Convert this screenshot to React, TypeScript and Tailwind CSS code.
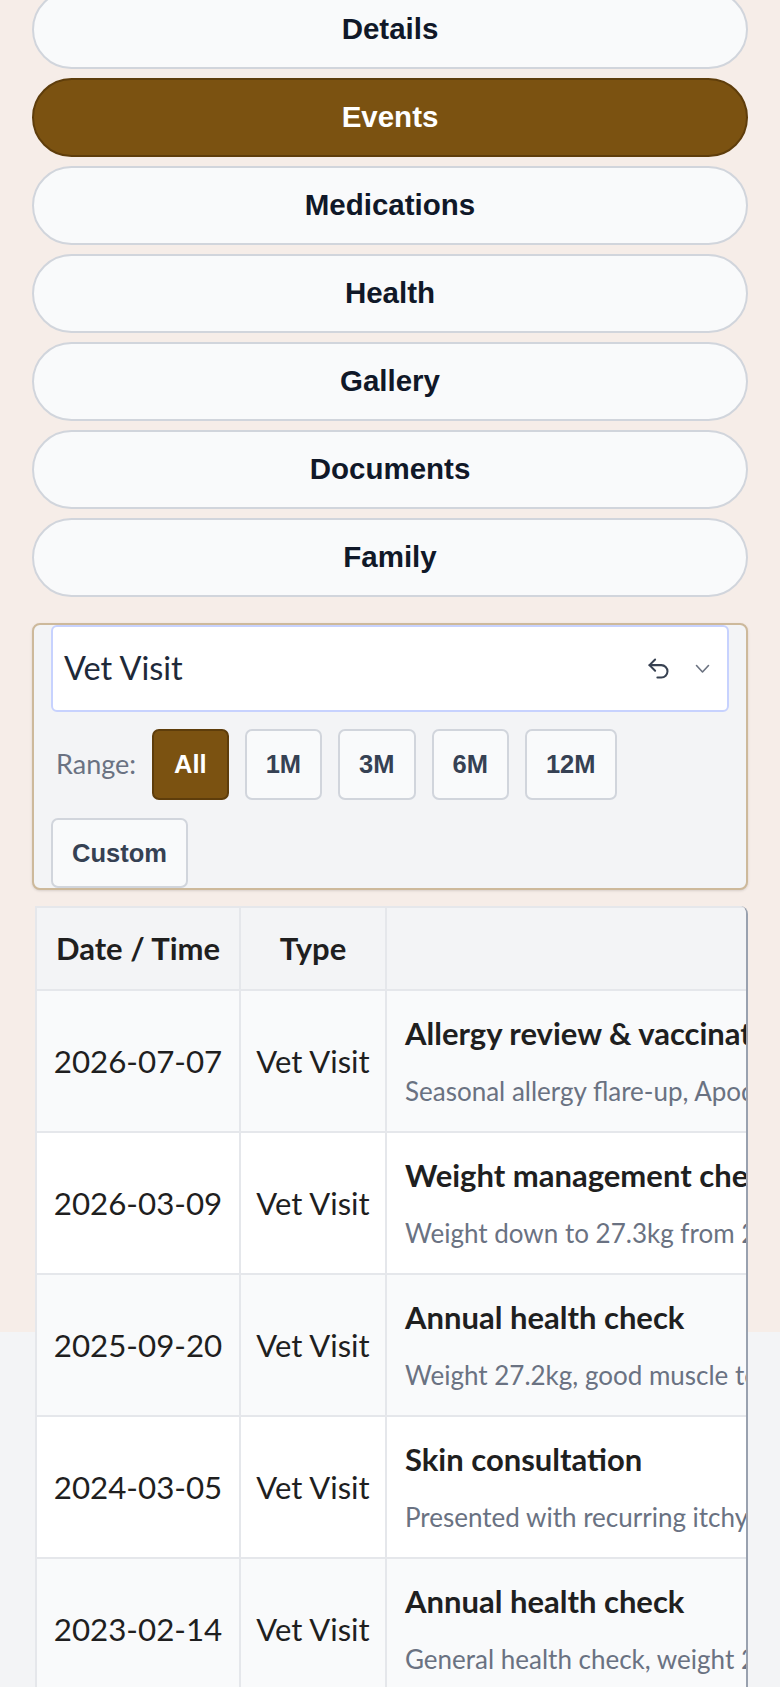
import React from 'react';

const tabs = ['Details', 'Events', 'Medications', 'Health', 'Gallery', 'Documents', 'Family'];
const ranges = ['All', '1M', '3M', '6M', '12M'];

const events = [
  {
    date: '2026-07-07',
    title: 'Allergy review & vaccination',
    note: 'Seasonal allergy flare-up, Apoquel dose adjusted, booster given',
  },
  {
    date: '2026-03-09',
    title: 'Weight management check',
    note: 'Weight down to 27.3kg from 28.1kg, diet plan continued',
  },
  {
    date: '2025-09-20',
    title: 'Annual health check',
    note: 'Weight 27.2kg, good muscle tone, teeth cleaned',
  },
  {
    date: '2024-03-05',
    title: 'Skin consultation',
    note: 'Presented with recurring itchy skin on paws and belly',
  },
  {
    date: '2023-02-14',
    title: 'Annual health check',
    note: 'General health check, weight 26.8kg, all vaccinations up to date',
  },
];

const UndoIcon = () => (
  <svg width="27" height="27" viewBox="0 0 24 24" fill="none" stroke="#374151" strokeWidth="1.8" strokeLinecap="round" strokeLinejoin="round">
    <path d="M9 14 4 9l5-5" />
    <path d="M4 9h10.5a5.5 5.5 0 0 1 5.5 5.5a5.5 5.5 0 0 1-5.5 5.5H11" />
  </svg>
);

const Chevron = () => (
  <svg width="15" height="10" viewBox="0 0 15 10" fill="none" stroke="#6b7280" strokeWidth="1.6" strokeLinecap="round" strokeLinejoin="round">
    <polyline points="1.5,1.5 7.5,8 13.5,1.5" />
  </svg>
);

export default function App() {
  return (
    <div className="min-h-screen bg-[#f3f4f6]">
      <div className="flex h-[1332px] flex-col bg-[#f6ede8] px-8">
        {/* tab buttons */}
        <div className="-mt-[10px] flex shrink-0 flex-col gap-[9px]">
          {tabs.map((t) => (
            <button
              key={t}
              className={
                t === 'Events'
                  ? "h-[79px] w-full rounded-full border-2 border-[#5e3d0b] bg-[#7b5211] font-['Liberation_Sans',Arial,sans-serif] text-[29.5px] font-bold text-white"
                  : "h-[79px] w-full rounded-full border-2 border-gray-300 bg-gray-50 font-['Liberation_Sans',Arial,sans-serif] text-[29.5px] font-bold text-gray-900"
              }
            >
              {t}
            </button>
          ))}
        </div>

        {/* filter card */}
        <div className="mt-[26px] shrink-0 rounded-lg border-2 border-[#cdb99b] bg-gray-100 px-[17px] pt-0 shadow-sm">
          <div className="flex h-[87px] items-center rounded-md border-2 border-[#c7d2fe] bg-white pl-[11px] pr-[17px] font-['Lato',sans-serif]">
            <span className="flex-1 text-[32.5px] text-gray-800">Vet Visit</span>
            <span className="mr-[23px] flex items-center">
              <UndoIcon />
            </span>
            <Chevron />
          </div>
          <div className="mt-[17px] flex items-center gap-[16px]">
            <span className="pl-[5px] font-['Lato',sans-serif] text-[27px] text-gray-500">Range:</span>
            {ranges.map((r) => (
              <button
                key={r}
                className={
                  r === 'All'
                    ? "h-[71px] rounded-[7px] border-2 border-[#5e3d0b] bg-[#7b5211] px-[20px] font-['Liberation_Sans',Arial,sans-serif] text-[25.5px] font-bold text-white"
                    : "h-[71px] rounded-[7px] border-2 border-gray-300 bg-gray-50 px-[19px] font-['Liberation_Sans',Arial,sans-serif] text-[25.5px] font-bold text-gray-700"
                }
              >
                {r}
              </button>
            ))}
          </div>
          <div className="mt-[18px] flex">
            <button className="h-[70px] rounded-[7px] border-2 border-gray-300 bg-gray-50 px-[19px] font-['Liberation_Sans',Arial,sans-serif] text-[25.5px] font-bold text-gray-700">
              Custom
            </button>
          </div>
        </div>

        {/* events table */}
        <div className="ml-[3px] mt-[16px] shrink-0 overflow-hidden rounded-tr-lg border-r-2 border-r-gray-400">
          <table className="w-[1000px] table-fixed border-collapse font-['Lato',sans-serif]">
            <thead>
              <tr className="bg-gray-100">
                <th className="h-[83px] w-[204px] border-2 border-gray-200 text-[31px] font-bold text-[#1f1f1f]">Date / Time</th>
                <th className="w-[146px] border-2 border-gray-200 text-[31px] font-bold text-[#1f1f1f]">Type</th>
                <th className="border-2 border-gray-200"></th>
              </tr>
            </thead>
            <tbody>
              {events.map((e, i) => (
                <tr key={e.date} className={i % 2 === 0 ? 'bg-gray-50' : 'bg-white'}>
                  <td className="h-[142px] border-2 border-gray-200 text-center text-[31.3px] text-[#1f1f1f]">{e.date}</td>
                  <td className="border-2 border-gray-200 text-center text-[31px] text-[#1f1f1f]">Vet Visit</td>
                  <td className="border-2 border-gray-200 px-[18px]">
                    <div className="whitespace-nowrap text-[31px] font-bold leading-[1.3] text-[#1f1f1f]">{e.title}</div>
                    <div className="mt-[22px] whitespace-nowrap text-[26px] leading-[1.3] text-gray-500">{e.note}</div>
                  </td>
                </tr>
              ))}
            </tbody>
          </table>
        </div>
      </div>
    </div>
  );
}
